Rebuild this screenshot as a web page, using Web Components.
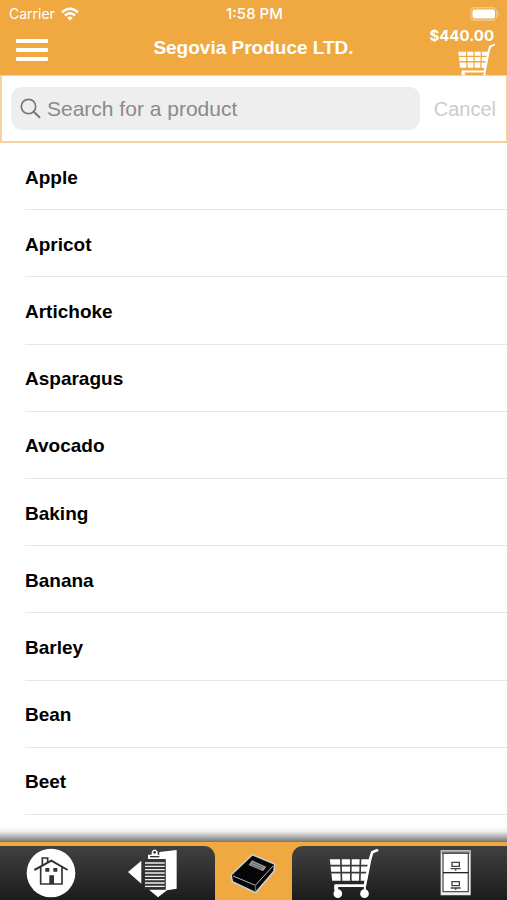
<!DOCTYPE html>
<html lang="en">
<head>
<meta charset="utf-8">
<meta name="viewport" content="width=device-width, initial-scale=1">
<title>Segovia Produce LTD.</title>
<style>
  html, body { height: 100%; }
  body { margin: 0; background: #fff; font-family: Inter, "Liberation Sans", sans-serif; --brand: #f0a841; }
</style>
</head>
<body>
<produce-app></produce-app>
<script>
const define = (name, html, setup) => customElements.define(name, class extends HTMLElement {
  constructor() {
    super();
    this.attachShadow({ mode: 'open' }).innerHTML = html;
  }
  connectedCallback() { if (setup) setup(this); }
});

define('cart-icon', `
<style>:host{display:block} svg{display:block;width:100%;height:100%}</style>
<svg viewBox="85 68 155 150" aria-hidden="true">
  <path d="M90 102H213L201 166H97Z" fill="#fff"/>
  <path d="M88 121H214M90 142H210M123 100L125 167M153 100V167M182 100L180 167" stroke="var(--cart-gap,#3a3a3a)" stroke-width="5"/>
  <path d="M232 75L217 81L211 101L195 181H107V192" fill="none" stroke="#fff" stroke-width="8" stroke-linecap="round" stroke-linejoin="round"/>
  <path d="M112 181V200M195 181V200" fill="none" stroke="#fff" stroke-width="6"/>
  <circle cx="114" cy="205" r="13" fill="#fff"/><circle cx="194" cy="205" r="13" fill="#fff"/>
</svg>`);

define('status-bar', `
<style>
  :host{display:grid;grid-template-columns:1fr auto 1fr;align-items:center;height:28px;padding:0 7px 0 9px;color:#fff;font-size:14px;line-height:16px}
  .left{display:flex;align-items:center;gap:6px}
  .time{font-size:15px;font-weight:500}
  svg{display:block}
  .battery{justify-self:end}
</style>
<span class="left"><span>Carrier</span>
<svg width="18" height="14" viewBox="0 0 18 14" aria-hidden="true"><g fill="none" stroke="#fff" stroke-width="2.4"><path d="M1 5.4Q9-1.9 17 5.4"/><path d="M3.9 8.5Q9 4 14.1 8.5"/></g><path d="M6.2 10.7Q9 8.5 11.8 10.7L9 13.7Z" fill="#fff"/></svg></span>
<span class="time">1:58 PM</span>
<svg class="battery" width="30" height="14" viewBox="0 0 30 14" aria-hidden="true"><rect x=".7" y=".7" width="26" height="12.6" rx="4" fill="none" stroke="#f5c784" stroke-width="1.4"/><rect x="2.5" y="2.5" width="22.5" height="9" rx="2" fill="#fff"/><path d="M28 5Q30 7 28 9Z" fill="#f5c784"/></svg>`);

define('app-header', `
<style>
  :host{display:block;background:var(--brand);overflow:hidden;color:#fff}
  .nav{display:grid;grid-template-columns:1fr auto 1fr;height:47px}
  button{border:0;padding:0;background:none;color:inherit;font:inherit}
  .menu{display:flex;flex-direction:column;gap:5px;width:32px;margin:11px 0 0 16px;align-self:start}
  .menu i{height:4px;border-radius:1px;background:#fff}
  h1{margin:8px 0 0;font:700 19px/24px "Liberation Sans",sans-serif}
  .basket{display:flex;flex-direction:column;align-items:flex-end;justify-self:end;padding-right:11px;font-size:15px;line-height:15px;font-weight:700}
  .basket span{padding-right:2px}
  cart-icon{width:39px;height:38px;flex:none;--cart-gap:var(--brand)}
</style>
<status-bar></status-bar>
<div class="nav">
  <button class="menu" aria-label="Menu"><i></i><i></i><i></i></button>
  <h1><slot></slot></h1>
  <button class="basket" aria-label="Cart, $440.00"><span>$440.00</span><cart-icon></cart-icon></button>
</div>`);

define('product-search', `
<style>
  :host{display:block}
  form{display:flex;align-items:center;gap:14px;box-sizing:border-box;height:68px;padding:0 10px 0 9px;border:solid #f5d2a2;border-width:1px 1px 2px 2px;background:#fff}
  label{flex:1;min-width:0;display:flex;align-items:center;gap:6px;height:43px;padding:0 9px;box-sizing:border-box;border-radius:11px;background:#eee}
  svg{flex:none}
  input{flex:1;min-width:0;border:0;padding:0;outline:0;background:none;font:21px/24px "Liberation Sans",sans-serif;color:#333}
  input::placeholder{color:#8a8a8d;opacity:1}
  button{border:0;padding:0;background:none;font:20px/24px "Liberation Sans",sans-serif;color:#ccc}
</style>
<form>
  <label><svg width="21" height="21" viewBox="0 0 21 21" fill="none" stroke="#77777a" stroke-width="1.7" stroke-linecap="round" aria-hidden="true"><circle cx="8.5" cy="8.5" r="7.2"/><path d="M13.8 13.8L19.5 19.2" stroke-width="2"/></svg>
  <input type="text" aria-label="Search for a product" placeholder="Search for a product"></label>
  <button type="button">Cancel</button>
</form>`);

define('product-row', `
<style>
  :host{display:flex}
  a{flex:1;display:flex;align-items:center;padding-top:3px;border-bottom:1px solid #e6e6e8;color:#000;text-decoration:none;font:700 19px/24px "Liberation Sans",sans-serif}
</style>
<a href="#"><slot></slot></a>`, el => el.setAttribute('role', 'listitem'));

define('product-list', `
<style>
  :host{display:grid;grid-auto-rows:minmax(67px,1fr);padding:0 0 27px 25px}
</style>
<slot></slot>`, el => el.setAttribute('role', 'list'));

define('tab-bar', `
<style>
  :host{display:block;position:relative;background:var(--brand);padding-top:4px}
  :host::before{content:"";position:absolute;left:0;right:0;bottom:100%;height:16px;background:linear-gradient(#fff0,#0001 35%,#0005 70%,#0008);pointer-events:none}
  nav{display:flex;height:54px}
  .side{flex:1;display:flex;background:linear-gradient(#414141,#1c1c1c)}
  .before{padding-right:12px;border-top-right-radius:11px}
  .after{padding-left:12px;border-top-left-radius:11px}
  a{flex:1;display:flex;align-items:center;justify-content:center}
  .active{flex:0 0 15%}
  svg{display:block;height:50px}
  cart-icon{width:52px;height:50px}
</style>
<nav aria-label="Main">
  <div class="side before">
    <a href="#" aria-label="Home"><svg viewBox="78 70 150 150">
      <circle cx="153" cy="145" r="73" fill="#fff"/>
      <path d="M122 125V178H186V125" fill="none" stroke="#333" stroke-width="5"/>
      <path d="M103 136L154 108L203 136" fill="none" stroke="#333" stroke-width="6"/>
      <path d="M127 121V100H143V112" fill="none" stroke="#333" stroke-width="5"/>
      <path d="M136 130h12v11h-12zM160 130h12v11h-12zM148 152h14v26h-14z" fill="#333"/>
    </svg></a>
    <a href="#" aria-label="Orders"><svg viewBox="45 68 160 150">
      <path d="M51 140L91 106V175Z" fill="#fff"/>
      <path d="M145 80L197 74V190L168 195L141 216L114 193H164V101H145Z" fill="#fff"/>
      <path d="M100 101H163V190H100Z" fill="#353535"/>
      <path d="M102 113H161M102 123H161M102 133H161M102 143H161M102 153H161M102 163H161M102 173H161M102 183H161" stroke="#eee" stroke-width="4"/>
      <path d="M111 101V88H122V79Q131 66 140 79V88H150V101Z" fill="#fff"/>
      <path d="M117 94H145" stroke="#333" stroke-width="4"/><circle cx="131" cy="81" r="4" fill="#333"/>
    </svg></a>
  </div>
  <a class="active" href="#" aria-label="Catalog" aria-current="page"><svg viewBox="70 68 145 150">
    <path d="M140 88L207 116L205 138L150 202L80 169L76 149Z" fill="#050505" stroke="#ccc" stroke-width="5" stroke-linejoin="round"/>
    <path d="M82 152L149 180L202 122" fill="none" stroke="#bbb" stroke-width="3"/>
    <path d="M149 182V200" fill="none" stroke="#777" stroke-width="3"/>
    <path d="M139 105L182 124L172 138L129 119Z" fill="#999"/>
    <path d="M140 112L173 126M137 118L168 131" stroke="#444" stroke-width="2"/>
  </svg></a>
  <div class="side after">
    <a href="#" aria-label="Cart"><cart-icon></cart-icon></a>
    <a href="#" aria-label="Archive"><svg viewBox="116 68 100 150">
      <path d="M121 75H211V210H121Z" fill="#eee"/>
      <path d="M124 78H208V86H124Z" fill="#777"/>
      <path d="M128 84H204V199H128Z" fill="#fff" stroke="#555" stroke-width="4"/>
      <path d="M128 142H204" stroke="#222" stroke-width="4"/>
      <path d="M155 111H177V123H155ZM151 130H181M166 130V136M155 169H177V181H155ZM151 188H181M166 188V194" fill="none" stroke="#444" stroke-width="4"/>
    </svg></a>
  </div>
</nav>`);

define('produce-app', `
<style>
  :host{display:flex;flex-direction:column;min-height:100vh}
  product-list{flex:1}
  tab-bar{position:sticky;bottom:0}
</style>
<app-header>Segovia Produce LTD.</app-header>
<product-search></product-search>
<product-list>
  <product-row>Apple</product-row>
  <product-row>Apricot</product-row>
  <product-row>Artichoke</product-row>
  <product-row>Asparagus</product-row>
  <product-row>Avocado</product-row>
  <product-row>Baking</product-row>
  <product-row>Banana</product-row>
  <product-row>Barley</product-row>
  <product-row>Bean</product-row>
  <product-row>Beet</product-row>
</product-list>
<tab-bar></tab-bar>`);
</script>
</body>
</html>
